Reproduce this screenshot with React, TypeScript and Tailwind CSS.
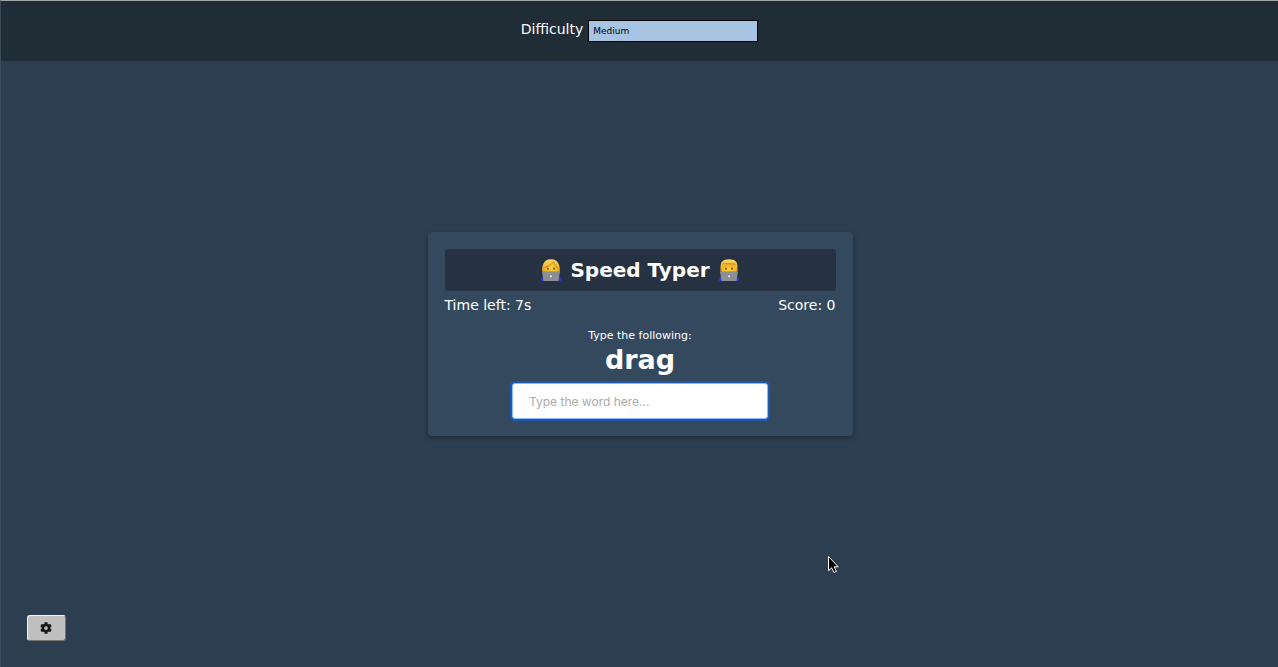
import { useState } from "react";
import { FaCog } from "react-icons/fa";

function Technologist({ longHair = false }: { longHair?: boolean }) {
  return (
    <svg viewBox="0 0 22 22" className="h-[22px] w-[22px] shrink-0" aria-hidden="true">
      <defs>
        <radialGradient id="skin" cx="50%" cy="60%" r="60%">
          <stop offset="0" stopColor="#ffd83d" />
          <stop offset="1" stopColor="#f5b020" />
        </radialGradient>
        <linearGradient id="hair" x1="0" y1="0" x2="0" y2="1">
          <stop offset="0" stopColor="#ffdc66" />
          <stop offset="1" stopColor="#e5a01a" />
        </linearGradient>
      </defs>
      <path d="M.8 22C1 19.500 2 17.500 4 17h14c2 .5 3 2.500 3.200 5z" fill="#2b32e0" />
      {longHair ? (
        <>
          <path d="M2 12.500C2.300 8 2.500 .3 11 .3S19.700 8 20 12.500z" fill="url(#hair)" />
          <path d="M4.800 8.500C8 7.500 11 5.500 13.500 3c1 2.500 3.700 4 4 7v3H4.800z" fill="url(#skin)" />
          <path d="M4.300 8.800C8 7.800 11 5.500 13.500 2.800c.8 2.200 3.500 4 4.200 7.200" fill="none" stroke="#bd780f" strokeWidth=".7" />
        </>
      ) : (
        <>
          <path d="M2.500 8C2.500 3 5 .3 11 .3S19.500 3 19.500 8v4h-17z" fill="url(#hair)" />
          <path d="M4 6.500C6 5 9 5.500 11 5.200c2.500.2 5-.3 7 1.300V13H4z" fill="url(#skin)" />
          <path d="M4.500 5.200C7 4 9 5.200 12 4.800c2 .2 4-.3 5.500.6" fill="none" stroke="#b8730b" strokeWidth=".8" />
        </>
      )}
      <ellipse cx="7.900" cy="9.700" rx=".8" ry="1" fill="#513711" />
      <ellipse cx="14" cy="9.700" rx=".8" ry="1" fill="#513711" />
      <path d="M6.800 8h2M13.100 8h2" stroke="#8b5b12" strokeWidth=".4" />
      <path d="M2.800 12.300h16.400q.8 0 .7.800L18.500 22h-15L2.100 13.100q-.1-.8.700-.8z" fill="#8e8f93" />
      <path d="M2.800 12.600h16.400" stroke="#a5a5a8" strokeWidth=".6" />
      <circle cx="11" cy="17.200" r="1" fill="#eeeeef" />
    </svg>
  );
}

function Pointer() {
  return (
    <svg viewBox="0 0 12 19" className="pointer-events-none absolute top-[554px] left-[826px] h-[19px] w-3" aria-hidden="true">
      <path d="M1.500 1.500v14.200l3.200-2.900 2.200 4.700 2.500-1.100-2.200-4.600h4z" fill="#000" stroke="#fff" strokeWidth="1" />
    </svg>
  );
}

export default function App() {
  const [difficulty, setDifficulty] = useState("medium");
  const [word, setWord] = useState("");

  return (
    <div className="relative flex min-h-screen flex-col border-t border-l border-t-[#a0a6a8] border-l-[#3b4b59] bg-[#2d3e50] font-['DejaVu_Sans',Verdana,sans-serif] text-white">
      <header className="flex h-[60px] items-start justify-center gap-[5px] bg-[#202c36] pt-[19px]">
        <label htmlFor="difficulty" className="text-sm leading-[18px]">Difficulty</label>
        <select
          id="difficulty"
          value={difficulty}
          onChange={(e) => setDifficulty(e.target.value)}
          className="h-[22px] w-[170px] appearance-none border border-black bg-[#a7c4e2] px-1 pt-[2px] text-[9px] text-black outline-none"
        >
          <option value="easy">Easy</option>
          <option value="medium">Medium</option>
          <option value="hard">Hard</option>
        </select>
      </header>

      <main className="flex grow items-center justify-center pb-[60px] pl-px">
        <section className="flex w-[425px] flex-col items-center rounded-[4px] bg-[#34495e] p-[17px] shadow-[0_2px_5px_rgba(0,0,0,0.3)]">
          <h1 className="flex h-[42px] w-full items-center justify-center gap-2 rounded-[3px] bg-[#263241] text-xl font-bold">
            <Technologist longHair />
            <span>Speed Typer</span>
            <Technologist />
          </h1>
          <div className="mt-1 flex w-full justify-between text-sm leading-5">
            <p>Time left: 7s</p>
            <p>Score: 0</p>
          </div>
          <label htmlFor="word" className="mt-[13px] text-[11px] leading-4">Type the following:</label>
          <h2 className="text-[27px] leading-8 font-bold">drag</h2>
          <input
            id="word"
            type="text"
            autoFocus
            autoComplete="off"
            placeholder="Type the word here..."
            value={word}
            onChange={(e) => setWord(e.target.value)}
            className="mt-[7px] h-9 w-64 rounded-[3px] border border-[#8fb9f2] bg-white px-4 font-[Inter,sans-serif] text-xs text-black caret-transparent shadow-[0_0_0_2px_#1d57b5] outline-none placeholder:text-[#aaaaaa]"
          />
        </section>
      </main>

      <button
        type="button"
        aria-label="Settings"
        className="absolute bottom-[26px] left-[26px] flex h-[26px] w-[39px] items-center justify-center rounded-[3px] border border-t-[#f3f3f3] border-r-[#77736f] border-b-[#77736f] border-l-[#f3f3f3] bg-[#c0c0c0] pr-[2px] pb-px text-[#181818]"
      >
        <FaCog className="h-3 w-3" />
      </button>
      <Pointer />
    </div>
  );
}
